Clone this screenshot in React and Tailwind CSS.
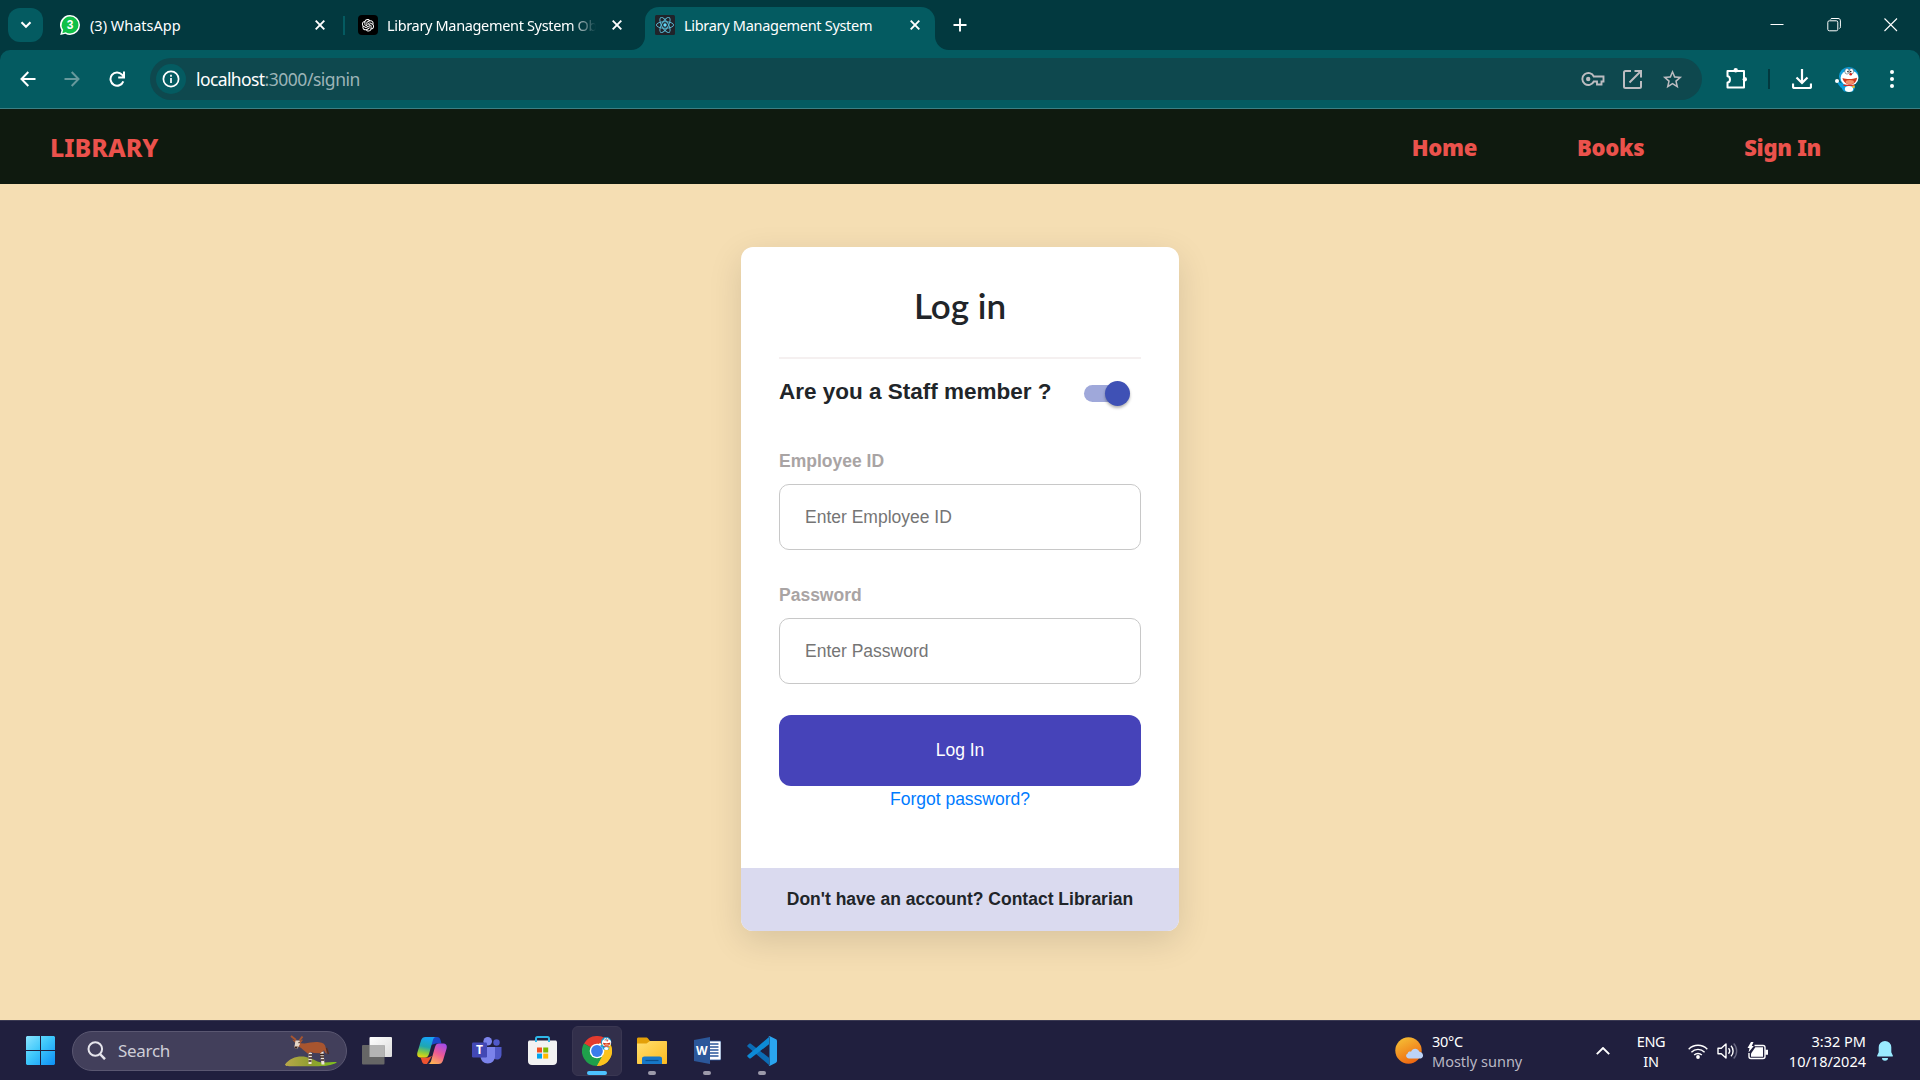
import { AiOutlineOpenAI } from "react-icons/ai";
import { MdStarBorder } from "react-icons/md";

const NOTO = "font-['Noto_Sans','Open_Sans',sans-serif]";
const ARIAL = "font-['Liberation_Sans',Arial,sans-serif]";

function CloseX({ className }) {
  return (
    <svg viewBox="0 0 10 10" className={`h-2.5 w-2.5 shrink-0 ${className}`} fill="none" stroke="#fff" strokeWidth="1.9">
      <path d="M.7.7l8.6 8.6M9.3.7L.7 9.3" />
    </svg>
  );
}

function WhatsAppIcon() {
  return (
    <svg viewBox="0 0 20 20" className="h-5 w-5 shrink-0">
      <path d="M10 0a10 10 0 0 1 0 20c-1.600 0-3.300-.4-4.700-1.200L.2 20l1.300-4.800A10 10 0 0 1 10 0z" fill="#fff" />
      <path d="M10 1.500a8.500 8.500 0 0 1 0 17c-1.500 0-3-.4-4.300-1.200L2.300 18.200l.9-3.400A8.500 8.500 0 0 1 10 1.500z" fill="#10c048" />
      <text x="10" y="14.300" fontSize="12" fontWeight="700" textAnchor="middle" fill="#fff" fontFamily="Liberation Sans, sans-serif">3</text>
    </svg>
  );
}

function ReactIcon() {
  return (
    <svg viewBox="0 0 20 20" className="h-5 w-5 shrink-0">
      <rect width="20" height="20" rx="1.500" fill="#20232a" />
      <g fill="none" stroke="#58b8d2" strokeWidth=".95">
        <ellipse cx="10" cy="10" rx="8.600" ry="3.300" />
        <ellipse cx="10" cy="10" rx="8.600" ry="3.300" transform="rotate(60 10 10)" />
        <ellipse cx="10" cy="10" rx="8.600" ry="3.300" transform="rotate(120 10 10)" />
      </g>
      <circle cx="10" cy="10" r="1.700" fill="#61dafb" />
    </svg>
  );
}

function Doraemon({ className }) {
  return (
    <svg viewBox="0 0 25 25" className={className}>
      <path d="M2 14l6 3-1.500 4.500L3 17z" fill="#0d9ddb" />
      <path d="M7 17h12l1 4-2 3.500H9L7 22z" fill="#0d9ddb" />
      <ellipse cx="13.800" cy="9.600" rx="9.800" ry="9.600" fill="#0d9ddb" />
      <ellipse cx="14.500" cy="11" rx="8.900" ry="7.800" fill="#fff" />
      <circle cx="2" cy="14" r="2" fill="#fff" />
      <ellipse cx="14" cy="22" rx="4.200" ry="2.900" fill="#fff" />
      <ellipse cx="12" cy="4.300" rx="2.200" ry="2.800" fill="#fff" stroke="#345" strokeWidth=".5" />
      <ellipse cx="16.400" cy="4.300" rx="2.200" ry="2.800" fill="#fff" stroke="#345" strokeWidth=".5" />
      <circle cx="12.900" cy="4.600" r=".8" fill="#222" />
      <circle cx="15.700" cy="4.600" r=".8" fill="#222" />
      <circle cx="15.700" cy="7.300" r="1.300" fill="#d8261c" />
      <path d="M7.500 11c4 1.300 10 1.300 14.500-.3-.2 4-3.500 6.800-7 6.800s-6.800-2.600-7.500-6.500z" fill="#d33a1d" />
      <ellipse cx="14.800" cy="15" rx="4.200" ry="2" fill="#f3906a" />
      <path d="M8.500 18.300h11" stroke="#d8261c" strokeWidth="1.300" />
      <circle cx="18.500" cy="19.800" r="1.300" fill="#f3c22b" />
    </svg>
  );
}

function TabStrip() {
  return (
    <div className="flex h-[50px] items-start bg-[#02393f]">
      <div className="mt-2 ml-2 flex h-[34px] w-[35px] shrink-0 items-center justify-center rounded-xl bg-[#045b61]">
        <svg viewBox="0 0 12 8" className="h-2 w-3" fill="none" stroke="#fff" strokeWidth="2.100">
          <path d="M1.500 1.300L6 5.800l4.500-4.500" />
        </svg>
      </div>
      <div className="flex h-[50px] w-[303px] shrink-0 items-center pl-[17px]">
        <WhatsAppIcon />
        <span className="mt-0.5 ml-2.5 text-[14.500px] whitespace-nowrap text-white">(3) WhatsApp</span>
        <CloseX className="mr-[21px] ml-auto" />
      </div>
      <div className="mt-4 -ml-[3px] h-[19px] w-[2px] shrink-0 bg-[#045b61]" />
      <div className="flex h-[50px] w-[300px] shrink-0 items-center pl-[13px]">
        <span className="flex h-5 w-5 shrink-0 items-center justify-center rounded-[4px] bg-black">
          <AiOutlineOpenAI className="h-4 w-4 text-white" />
        </span>
        <span className="mt-0.5 ml-[9px] w-[209px] overflow-hidden text-[14.500px] tracking-[-0.34px] whitespace-nowrap text-white [mask-image:linear-gradient(to_right,black_88%,transparent_100%)]">
          Library Management System Ob
        </span>
        <CloseX className="ml-4" />
      </div>
      <div className="relative mt-[7px] flex h-[43px] w-[290px] shrink-0 items-center rounded-t-[14px] bg-[#045b61] pb-[7px] pl-2.5">
        <svg viewBox="0 0 14 14" className="absolute bottom-0 -left-[14px] h-[14px] w-[14px]"><path d="M14 0v14H0A14 14 0 0 0 14 0z" fill="#045b61" /></svg>
        <svg viewBox="0 0 14 14" className="absolute -right-[14px] bottom-0 h-[14px] w-[14px]"><path d="M0 0v14h14A14 14 0 0 1 0 0z" fill="#045b61" /></svg>
        <ReactIcon />
        <span className="mt-0.5 ml-[9px] text-[14.500px] tracking-[-0.3px] whitespace-nowrap text-white">Library Management System</span>
        <CloseX className="mr-[15px] ml-auto" />
      </div>
      <svg viewBox="0 0 14 14" className="mt-[18px] ml-[18px] h-[14px] w-[14px]" stroke="#fff" strokeWidth="1.900"><path d="M7 .5v13M.5 7h13" /></svg>
      <div className="mt-[18px] mr-[22px] ml-auto flex gap-[43px]">
        <svg viewBox="0 0 14 14" className="h-[14px] w-[14px]" stroke="#fff"><path d="M.5 6.500h13" /></svg>
        <svg viewBox="0 0 14 14" className="h-[14px] w-[14px]" fill="none" stroke="#fff">
          <rect x=".8" y="2.800" width="10" height="10" rx="1.500" />
          <path d="M3.300 1.500C3.600.8 4.200.5 5 .5h6c1.500 0 2.400.8 2.400 2.300v6c0 .8-.2 1.400-.9 1.700" />
        </svg>
        <svg viewBox="0 0 14 14" className="h-[14px] w-[14px]" stroke="#fff" strokeWidth="1.100"><path d="M.5.5l12.500 12.500M13 .5L.5 13" /></svg>
      </div>
    </div>
  );
}

function Toolbar() {
  return (
    <div className="bg-[#02393f]">
      <div className="flex h-[59px] items-center rounded-t-[10px] border-b border-[#3c7f84] bg-[#045b61] pl-5">
        <svg viewBox="0 0 16 16" className="h-4 w-4 shrink-0" fill="none" stroke="#fff" strokeWidth="2"><path d="M15.500 8H2M8.300 1L1.500 8l6.800 7" /></svg>
        <svg viewBox="0 0 16 16" className="ml-7 h-4 w-4 shrink-0" fill="none" stroke="#67999c" strokeWidth="2"><path d="M.5 8h14M7.700 1l6.800 7-6.800 7" /></svg>
        <svg viewBox="0 0 16 16" className="ml-[29px] h-4 w-4 shrink-0" fill="none" stroke="#fff" strokeWidth="2"><path d="M14.300 10.300A6.600 6.600 0 1 1 13 3.600l1.800 2M15 .6v5.900H9.200" /></svg>
        <div className="ml-[25px] flex h-[42px] w-[1552px] shrink-0 items-center rounded-full bg-[#0e484e] pl-1.5">
          <div className="flex h-[30px] w-[30px] items-center justify-center rounded-full bg-[#045b61]">
            <svg viewBox="0 0 18 18" className="h-[18px] w-[18px]" fill="none" stroke="#fff" strokeWidth="1.700"><circle cx="9" cy="9" r="7.600" /><path d="M9 8v5M9 4.800v1.900" /></svg>
          </div>
          <span className="mt-px ml-2.5 text-[17.500px] tracking-[-0.6px] text-white">localhost</span>
          <span className="mt-px text-[17.500px] tracking-[-0.48px] text-[#9cb4b7]">:3000/signin</span>
          <svg viewBox="0 0 24 16" className="ml-auto h-4 w-6" fill="none" stroke="#bcbcc0" strokeWidth="1.900">
            <path d="M12.800 5.500h9.700v5h-2v3h-4.500v-3h-3.200A6 6 0 1 1 12.800 5.500z" /><circle cx="7.200" cy="8" r="2.200" fill="#bcbcc0" stroke="none" />
          </svg>
          <svg viewBox="0 0 19 19" className="ml-[18px] h-[19px] w-[19px]" fill="none" stroke="#bcbcc0" strokeWidth="2"><path d="M8 1H2.500A1.500 1.500 0 0 0 1 2.500v14A1.500 1.500 0 0 0 2.500 18h14a1.500 1.500 0 0 0 1.500-1.500V11M11.500 1H18v6.500M18 1L6.500 12.500" /></svg>
          <MdStarBorder className="mr-[18px] ml-[19px] h-[23px] w-[23px] text-[#bcbcc0]" />
        </div>
        <svg viewBox="0 0 22 22" className="mt-[-2px] ml-6 h-[22px] w-[22px] shrink-0" fill="none" stroke="#fff" strokeWidth="2" strokeLinejoin="round">
          <path d="M1.500 4h16.500v16.500H1.500v-5c3.300-.2 3.300-6 0-6.200z" /><circle cx="9.700" cy="3.200" r="2.200" fill="#fff" stroke="none" /><circle cx="18.800" cy="12.200" r="2.200" fill="#fff" stroke="none" />
        </svg>
        <div className="ml-5 h-5 w-[2px] bg-[#02393f]" />
        <svg viewBox="0 0 20 20" className="ml-[22px] h-5 w-5" fill="none" stroke="#fff" strokeWidth="2.200"><path d="M10 0v14M4.500 8.500L10 14l5.500-5.500M1 14.500v3A1.500 1.500 0 0 0 2.500 19h15a1.500 1.500 0 0 0 1.500-1.500v-3" /></svg>
        <Doraemon className="ml-[23px] h-[25px] w-[25px]" />
        <svg viewBox="0 0 4 20" className="ml-[30px] h-5 w-1" fill="#fff"><circle cx="2" cy="3" r="2" /><circle cx="2" cy="10" r="2" /><circle cx="2" cy="17" r="2" /></svg>
      </div>
    </div>
  );
}

function NavBar() {
  return (
    <nav className="flex h-[75px] items-center bg-[#0f1a0f] pr-[99px] pl-[50px] text-[#eb524c]">
      <span className="mt-[3px] text-[25px] font-extrabold">LIBRARY</span>
      <div className="mt-px ml-auto flex gap-[100px] text-[22px] font-black tracking-[-0.3px]">
        <span>Home</span>
        <span>Books</span>
        <span>Sign In</span>
      </div>
    </nav>
  );
}

function Field({ label, placeholder }) {
  return (
    <label className="block">
      <span className="block text-[17.500px] leading-[22px] font-bold text-[#a9a4a4]">{label}</span>
      <input readOnly placeholder={placeholder} className="mt-3 block h-[66px] w-full rounded-[10px] border border-[#c8c8c8] pl-[25px] text-[17.500px] placeholder-[#757575]" />
    </label>
  );
}

function LoginCard() {
  return (
    <div className={`flex h-[684px] w-[438px] flex-col overflow-hidden rounded-[12px] bg-white text-[#212529] shadow-[0_10px_34px_rgba(0,0,0,0.12)] ${ARIAL}`}>
      <div className="flex flex-1 flex-col px-[38px]">
        <h2 className="mt-[37px] self-center font-[Lato] text-[35px] leading-[42px] font-semibold">Log in</h2>
        <div className="mt-[31px] h-[2px] bg-[#f5f0f0]" />
        <div className="mt-5 flex h-[28px] items-center">
          <span className="-mt-[3px] text-[22.500px] font-bold">Are you a Staff member ?</span>
          <div className="relative mr-[11px] ml-auto h-[25px] w-[46px]">
            <div className="mt-1 h-[17.500px] w-[42.500px] rounded-full bg-[#9fa8da]" />
            <div className="absolute top-0 right-0 h-[25px] w-[25px] rounded-full bg-[#3f51b5] shadow-[0_2px_3px_rgba(0,0,0,0.3)]" />
          </div>
        </div>
        <div className="mt-[43px]"><Field label="Employee ID" placeholder="Enter Employee ID" /></div>
        <div className="mt-[34px]"><Field label="Password" placeholder="Enter Password" /></div>
        <button className="mt-[31px] h-[71px] w-full shrink-0 rounded-[12px] bg-[#4643b9] text-[17.500px] text-white">Log In</button>
        <a className="self-center text-[17.500px] leading-[26px] text-[#007bff]">Forgot password?</a>
      </div>
      <div className="flex h-[63px] shrink-0 items-center justify-center bg-[#dadaef] text-[17.500px] font-bold">
        Don't have an account? Contact Librarian
      </div>
    </div>
  );
}

function WindowsLogo() {
  return (
    <svg viewBox="0 0 29 29" className="h-[29px] w-[29px] shrink-0">
      <defs><linearGradient id="win" x1="0" y1="0" x2="1" y2="1"><stop offset="0" stopColor="#8be4ff" /><stop offset=".45" stopColor="#3fc8fb" /><stop offset="1" stopColor="#0d8ff5" /></linearGradient></defs>
      <path fill="url(#win)" d="M1 0h13v14H0V1zM15 0h13l1 1v13H15zM0 15h14v14H1l-1-1zM15 15h14v13l-1 1H15z" />
    </svg>
  );
}

function Okapi() {
  return (
    <svg viewBox="0 0 54 32" className="h-8 w-[54px]">
      <defs><linearGradient id="hill" x1="0" x2="1"><stop offset="0" stopColor="#b9a84a" /><stop offset=".5" stopColor="#8f9f2f" /><stop offset="1" stopColor="#7fc31c" /></linearGradient></defs>
      <path d="M1 29.500C6 23 14 20.500 22 22c6 1.200 10 4.500 15 5.500 5 .5 11-.8 16-.3-5 3.500-13 4-22 4H8c-4 0-7-.3-7-1.700z" fill="url(#hill)" />
      <path d="M36 17l3.500-.5 1 13h-3zM24.500 17l3.500 1-.5 11h-3z" fill="#efe6dc" />
      <path d="M24.500 20h3.500M24.500 23h3.500M24.500 26h3M36 19.500h4M36 22h4M37 25h3" stroke="#3b2219" strokeWidth="1.300" />
      <path d="M8 4.500l4 1.200 3.200.2 4-1.500-2.600 3.800 4 .3c5-.6 9-2 14.500-1.300 4 .2 6.200 2 6.600 5.500l1.200 6-1.600-1-1.300-2.500-3.500 3-6.500-.3-3.500-.8-2.500 1.600C21 16.500 18.500 14 14.800 11.500l-2.300 1.400-1.800-.8L11.300 8z" fill="#a8552f" />
      <path d="M7 1l5 4M18.500 1.500L15.500 5.500" stroke="#a8552f" strokeWidth="2" />
      <path d="M11.500 5.500h4l.5 3.500-2.500 4.500h-2.500l-.5-2z" fill="#e6d6c8" />
      <path d="M10.800 11.500h3l-.8 2h-2zM14.500 7h1.200v1.300h-1.200z" fill="#3b2219" />
      <path d="M42.500 13l2 6" stroke="#5b2c19" strokeWidth="1.300" />
    </svg>
  );
}

function TaskView() {
  return (
    <svg viewBox="0 0 30 28" className="h-7 w-[30px]">
      <defs><linearGradient id="tv" x1="0" y1="0" x2="1" y2="1"><stop offset="0" stopColor="#fff" /><stop offset="1" stopColor="#dcdcdc" /></linearGradient></defs>
      <rect x="7.500" y="0" width="22.500" height="20" rx="1" fill="url(#tv)" />
      <rect x="0" y="8" width="22.500" height="19.500" rx="1" fill="#666" />
      <rect x="7.500" y="8" width="15" height="12" fill="#b4b4b4" />
    </svg>
  );
}

function Copilot() {
  return (
    <svg viewBox="0 0 30 28" className="h-7 w-[30px]">
      <defs>
        <linearGradient id="cpa" x1=".4" y1="0" x2=".2" y2="1"><stop offset="0" stopColor="#17a3f5" /><stop offset=".45" stopColor="#1fa7b0" /><stop offset=".75" stopColor="#8ccb3c" /><stop offset="1" stopColor="#f5d50c" /></linearGradient>
        <linearGradient id="cpb" x1=".8" y1="0" x2=".3" y2="1"><stop offset="0" stopColor="#a14bea" /><stop offset=".5" stopColor="#ee5a93" /><stop offset="1" stopColor="#fdb254" /></linearGradient>
      </defs>
      <path d="M14 0h6c2 0 3 1 3.500 3l1 3.500H19L14 8z" fill="#1b48c8" />
      <path d="M10 27h-2c-2.500 0-3-2-3.500-4l-1-2.500H11L15 19z" fill="#ee5330" />
      <path d="M8.500 0H19c-1.800 0-2.600 1.500-3.200 3.500L12 17c-.7 2.400-2 3.500-4 3.500H3.500C.8 20.500-.3 18.500.4 15.500L4 3.500C4.800 1 6.300 0 8.500 0z" fill="url(#cpa)" />
      <path d="M21.500 27H10.800c1.800 0 2.800-1.500 3.400-3.500L18 10c.7-2.400 2-3.500 4-3.500h4.500c2.700 0 3.800 2 3.100 5L26 23.500c-.8 2.500-2.300 3.500-4.500 3.500z" fill="url(#cpb)" />
    </svg>
  );
}

function Teams() {
  return (
    <svg viewBox="0 0 30 27" className="h-[27px] w-[30px]">
      <circle cx="24.500" cy="5.500" r="3.200" fill="#5059c9" />
      <path d="M21 10h8.500v7.500c0 3-2 5-4.500 5s-4-1-4-4z" fill="#4f58c6" />
      <circle cx="15.700" cy="4.300" r="4.300" fill="#7b83eb" />
      <path d="M8.500 10H23v9c0 4.500-3 7.500-7.200 7.500S8.500 23.500 8.500 19z" fill="#7b83eb" />
      <rect x="0" y="5.500" width="15" height="15" rx="1.200" fill="#4248b5" />
      <text x="7.500" y="17.300" fontSize="12" fontWeight="700" fill="#fff" textAnchor="middle" fontFamily="Noto Sans, sans-serif">T</text>
    </svg>
  );
}

function Store() {
  return (
    <svg viewBox="0 0 29 29" className="h-[29px] w-[29px]">
      <path d="M8 6V2.500C8 1.500 8.500 1 9.500 1h10c1 0 1.500.5 1.500 1.500V6" fill="none" stroke="#2fb7e8" strokeWidth="2" />
      <path d="M1 4.500h27l1 1V25c0 2.500-1.500 4-4 4H4c-2.500 0-4-1.500-4-4V5.500z" fill="#f2f2f2" />
      <path d="M8 4v2M21 4v2" stroke="#2fb7e8" strokeWidth="2" />
      <path d="M9 11.500h5v5H9z" fill="#f25022" /><path d="M15.200 11.500h5v5h-5z" fill="#7fba00" />
      <path d="M9 17.600h5v5H9z" fill="#00a4ef" /><path d="M15.200 17.600h5v5h-5z" fill="#ffb900" />
    </svg>
  );
}

function Chrome() {
  return (
    <svg viewBox="0 0 30 30" className="h-[30px] w-[30px]">
      <path d="M15 15L2 7.500A15 15 0 0 1 28 7.500z" fill="#e33b2e" />
      <path d="M15 15h7l6-7.500A15 15 0 0 1 15 30z" fill="#fcc31e" />
      <path d="M2 7.500A15 15 0 0 0 15 30l6.200-11.500L15 15z" fill="#1fa04b" />
      <path d="M15 7.800h13.100A15 15 0 0 1 15 30l6.500-11.500z" fill="#fcc31e" />
      <circle cx="15" cy="15" r="7.300" fill="#fff" /><circle cx="15" cy="15" r="5.900" fill="#3a7cec" />
    </svg>
  );
}

function Folder() {
  return (
    <svg viewBox="0 0 30 27" className="h-[27px] w-[30px]">
      <defs><linearGradient id="fld" x1="0" y1="0" x2="1" y2="1"><stop offset="0" stopColor="#ffdf70" /><stop offset="1" stopColor="#fdbb1f" /></linearGradient></defs>
      <path d="M0 2C0 1 .6.500 1.500.500h7.500c1 0 1.500.3 2 1L13 4v5H0z" fill="#e3a008" />
      <path d="M0 6.500h9.500L13 4h16c.7 0 1 .4 1 1v21c0 .6-.4 1-1 1H1c-.6 0-1-.4-1-1z" fill="url(#fld)" />
      <path d="M5 27v-5c0-1.800 1-2.500 2.500-2.500h15c1.500 0 2.500.7 2.500 2.500v5z" fill="#1778c8" />
      <path d="M8.500 23.500h13" stroke="#0c4f8c" strokeWidth="1.200" />
    </svg>
  );
}

function Word() {
  return (
    <svg viewBox="0 0 27 27" className="h-[27px] w-[27px]">
      <path d="M14 4h12c.6 0 1 .4 1 1v17c0 .6-.4 1-1 1H14z" fill="#fff" stroke="#2b579a" strokeWidth=".8" />
      <path d="M16 7h8.500M16 10h8.500M16 13h8.500M16 16h8.500M16 19h8.500" stroke="#2b579a" strokeWidth="1.400" />
      <path d="M0 3L16 0v27L0 24z" fill="#2b579a" />
      <text x="7.800" y="18" fontSize="12" fontWeight="700" fill="#fff" textAnchor="middle" fontFamily="Noto Sans, sans-serif">W</text>
    </svg>
  );
}

function VSCode() {
  return (
    <svg viewBox="0 0 30 30" className="h-[30px] w-[30px]">
      <path d="M.6 9.300L2.200 7.800c.5-.4 1.100-.4 1.600 0L22 21.700V29L.6 10.700c-.5-.4-.5-1 0-1.400z" fill="#0b6cb5" />
      <path d="M.6 20.700l1.600 1.500c.5.400 1.100.4 1.600 0L22 8.300V1L.6 19.300c-.5.4-.5 1 0 1.400z" fill="#0d8ad6" />
      <path d="M21 .5c.5-.5 1.300-.5 2-.2l5.500 2.700c1 .4 1.500 1.200 1.500 2.200v19.600c0 1-.5 1.800-1.500 2.200L23 29.700c-.7.3-1.500.3-2-.2.900.6 1.500 0 1.500-1V1.500c0-1-.6-1.600-1.500-1z" fill="#2aa5f0" />
    </svg>
  );
}

function TaskItem({ children, active, running }) {
  return (
    <div className={active ? "relative flex h-[50px] w-[50px] items-center justify-center rounded-md border border-[#3a3752] bg-[#322f4b]" : "relative flex h-[50px] w-[50px] items-center justify-center"}>
      {children}
      {active && <span className="absolute bottom-0 h-1 w-5 rounded-full bg-[#4cc2ff]" />}
      {running && <span className="absolute bottom-px h-1 w-2 rounded-full bg-[#9c9aaa]" />}
    </div>
  );
}

function Weather() {
  return (
    <svg viewBox="0 0 29 28" className="h-7 w-[29px]">
      <defs><linearGradient id="sun" x1=".2" y1="0" x2=".7" y2="1"><stop offset="0" stopColor="#f5bf35" /><stop offset="1" stopColor="#ee6410" /></linearGradient></defs>
      <circle cx="13.500" cy="13.500" r="13.200" fill="url(#sun)" />
      <path d="M14 21.500c-3 0-4-3.800-1.300-5 .3-1.700 2-2.300 3.300-1.700 1.300-3.800 6.500-4.500 8.500 0 3.800.3 5 5.500 1.300 6.700z" fill="#bcd3f7" />
    </svg>
  );
}

function Tray() {
  return (
    <div className="mr-[27px] ml-auto flex items-center">
      <Weather />
      <div className="ml-2 w-[120px] text-[14.500px] leading-[20px]">
        <div className="tracking-[-0.3px]">30°C</div>
        <div className="text-[#b9b8c4]">Mostly sunny</div>
      </div>
      <svg viewBox="0 0 14 8" className="ml-11 h-2 w-[14px]" fill="none" stroke="#fff" strokeWidth="1.900"><path d="M.8 7.200L7 1l6.200 6.200" /></svg>
      <div className="ml-[26px] w-[30px] text-center text-[14.500px] leading-[20px] tracking-[-0.3px]"><div>ENG</div><div>IN</div></div>
      <svg viewBox="0 0 20 16" className="ml-[22px] h-4 w-5" fill="none" stroke="#fff" strokeWidth="1.400"><path d="M.7 6.200a13 13 0 0 1 18.600 0M3.400 9.200a9.200 9.200 0 0 1 13.200 0M6.200 12a5.400 5.400 0 0 1 7.600 0" /><circle cx="10" cy="14" r="1.900" fill="#fff" stroke="none" /></svg>
      <svg viewBox="0 0 21 18" className="ml-[9px] h-[18px] w-[21px]" fill="none" stroke="#fff" strokeWidth="1.400" strokeLinejoin="round"><path d="M1 6.300h3.300L9 2v14l-4.700-4.300H1z" /><path d="M11.500 6.300a4 4 0 0 1 0 5.400M14 3.800a7.500 7.500 0 0 1 0 10.400" /><path d="M16.700 1.500a11 11 0 0 1 0 15" stroke="#686780" /></svg>
      <svg viewBox="0 0 21 18" className="ml-[9px] h-[18px] w-[21px]" fill="none" stroke="#fff" strokeWidth="1.400"><path d="M7.500 3.500H16A2 2 0 0 1 18 5.500v9a2 2 0 0 1-2 2H4a2 2 0 0 1-2-2V11" /><path d="M8.300 5.300H16v9.500H4V11.500z" fill="#fff" stroke="none" /><path d="M19 8.500h1.500v3.500H19z" fill="#fff" /><path d="M4 0L.5 6h2L1.500 10.500 6.800 4h-2L6.500 0z" fill="#fff" stroke="none" /></svg>
      <div className="ml-[19px] w-[79px] text-right text-[14.500px] leading-[20px]"><div>3:32 PM</div><div>10/18/2024</div></div>
      <svg viewBox="0 0 16 20" className="ml-[11px] h-5 w-4" fill="#99ebff"><path d="M8 0a6.300 6.300 0 0 1 6.300 6.300v5l1.600 3.400c.2.400 0 .8-.5.8H.6c-.5 0-.7-.4-.5-.8l1.600-3.400v-5A6.300 6.300 0 0 1 8 0zM5 17h6a3 2.800 0 0 1-6 0z" /></svg>
    </div>
  );
}

function Taskbar() {
  return (
    <div className="flex h-[60px] items-center border-t border-[#3a3952] bg-[#201f3e] pl-[26px] text-white">
      <WindowsLogo />
      <div className="ml-[17px] flex h-10 w-[275px] items-center rounded-full border border-[#5a5771] bg-[#423f5b] pl-[14px]">
        <svg viewBox="0 0 19 19" className="h-[19px] w-[19px]" fill="none" stroke="#e6e5ec" strokeWidth="2"><circle cx="8.300" cy="8" r="6.800" /><path d="M13 13l5 5.200" strokeWidth="2.500" /></svg>
        <span className="ml-3 text-[17px] tracking-[-0.3px] text-[#cfced8]">Search</span>
        <div className="mr-2 ml-auto"><Okapi /></div>
      </div>
      <div className="ml-[5px] flex gap-[5px]">
        <TaskItem><TaskView /></TaskItem>
        <TaskItem><Copilot /></TaskItem>
        <TaskItem><Teams /></TaskItem>
        <TaskItem><Store /></TaskItem>
        <TaskItem active>
          <Chrome />
          <Doraemon className="absolute top-[9px] right-[9px] h-[15px] w-[13px]" />
        </TaskItem>
        <TaskItem running><Folder /></TaskItem>
        <TaskItem running><Word /></TaskItem>
        <TaskItem running><VSCode /></TaskItem>
      </div>
      <Tray />
    </div>
  );
}

export default function App() {
  return (
    <div className={`flex h-[1080px] w-[1920px] flex-col overflow-hidden ${NOTO}`}>
      <TabStrip />
      <Toolbar />
      <NavBar />
      <main className="flex flex-1 justify-center bg-[#f5deb3] pt-[63px]">
        <LoginCard />
      </main>
      <Taskbar />
    </div>
  );
}
